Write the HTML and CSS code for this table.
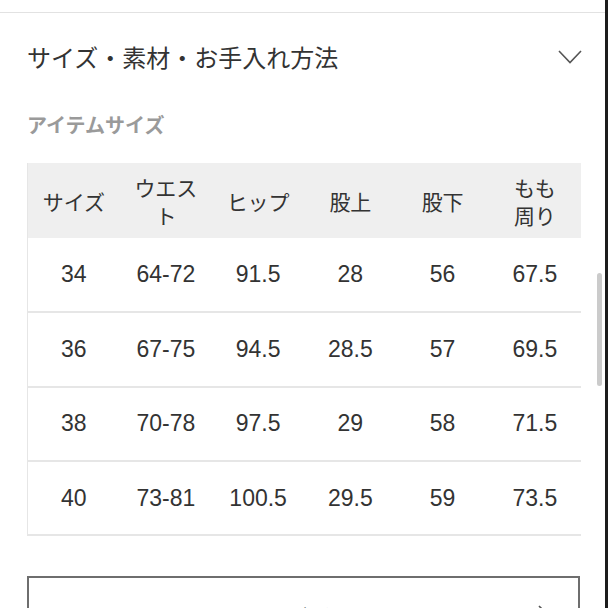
FILE: index.html
```html
<!DOCTYPE html>
<html lang="ja">
<head>
<meta charset="utf-8">
<link rel="stylesheet" href="styles.css">
</head>
<body>
<div class="page">
  <div class="topline"></div>
  <section class="acc">
    <div class="acc-head">
      <h2 class="acc-title">サイズ・素材・お手入れ方法</h2>
      <svg class="chev" width="24" height="14" viewBox="0 0 24 14"><polyline points="1,1 12,12.5 23,1" fill="none" stroke="#555" stroke-width="1.6"/></svg>
    </div>
    <h3 class="sub">アイテムサイズ</h3>
    <table class="size-table">
      <thead>
        <tr><th>サイズ</th><th>ウエス<br>ト</th><th>ヒップ</th><th>股上</th><th>股下</th><th>もも<br>周り</th></tr>
      </thead>
      <tbody>
        <tr><td>34</td><td>64-72</td><td>91.5</td><td>28</td><td>56</td><td>67.5</td></tr>
        <tr><td>36</td><td>67-75</td><td>94.5</td><td>28.5</td><td>57</td><td>69.5</td></tr>
        <tr><td>38</td><td>70-78</td><td>97.5</td><td>29</td><td>58</td><td>71.5</td></tr>
        <tr><td>40</td><td>73-81</td><td>100.5</td><td>29.5</td><td>59</td><td>73.5</td></tr>
      </tbody>
    </table>
    <a class="guide" href="#">サイズガイド<svg class="guide-arrow" width="12" height="22" viewBox="0 0 12 22"><polyline points="1,1 11,11 1,21" fill="none" stroke="#555" stroke-width="1.6"/></svg></a>
  </section>
  <div class="scrollbar"></div>
</div>
</body>
</html>
```
FILE: styles.css
```css
* { box-sizing: border-box; }
html, body { margin: 0; padding: 0; background: #fff; }
body {
  font-family: "Liberation Sans", "Noto Sans CJK JP", sans-serif;
  color: #333;
}
.page {
  position: relative;
  width: 608px;
  height: 608px;
  overflow: hidden;
  border-right: 3px solid #1c1c1c;
}
.topline {
  height: 13px;
  border-bottom: 1px solid #e2e2e2;
}
.acc {
  padding: 0 24px 0 27px;
}
.acc-head {
  display: flex;
  align-items: center;
  justify-content: space-between;
  height: 88px;
}
.acc-title {
  margin: 0;
  font-family: "Noto Sans CJK JP", sans-serif;
  font-weight: 400;
  font-size: 24px;
  line-height: 32px;
  color: #333;
}
.chev { margin-right: -1px; }
.sub {
  margin: 12px 0 26px;
  font-family: "Noto Sans CJK JP", sans-serif;
  font-size: 20px;
  line-height: 24px;
  font-weight: 700;
  color: #9a9a9a;
}
.size-table {
  width: 554px;
  border-collapse: collapse;
  table-layout: fixed;
  border-left: 1px solid #e6e6e6;
}
.size-table th {
  height: 75px;
  padding: 0;
  background: #efefef;
  font-family: "Noto Sans CJK JP", sans-serif;
  font-weight: 400;
  font-size: 21px;
  line-height: 28px;
  color: #333;
  text-align: center;
}
.size-table td {
  height: 74.3px;
  padding: 0;
  border-bottom: 2px solid #e6e6e6;
  font-size: 23px;
  text-align: center;
  color: #333;
}
.guide {
  position: relative;
  display: block;
  margin-top: 40px;
  width: 553px;
  height: 80px;
  border: 2px solid #6e6e6e;
  text-align: center;
  line-height: 76px;
  font-family: "Noto Sans CJK JP", sans-serif;
  font-size: 22px;
  color: #333;
  text-decoration: none;
  padding-left: 10px;
}
.guide-arrow {
  position: absolute;
  right: 28px;
  top: 27px;
}
.scrollbar {
  position: absolute;
  left: 597px;
  top: 273px;
  width: 5px;
  height: 113px;
  border-radius: 3px;
  background: #cbcbcb;
}
```
